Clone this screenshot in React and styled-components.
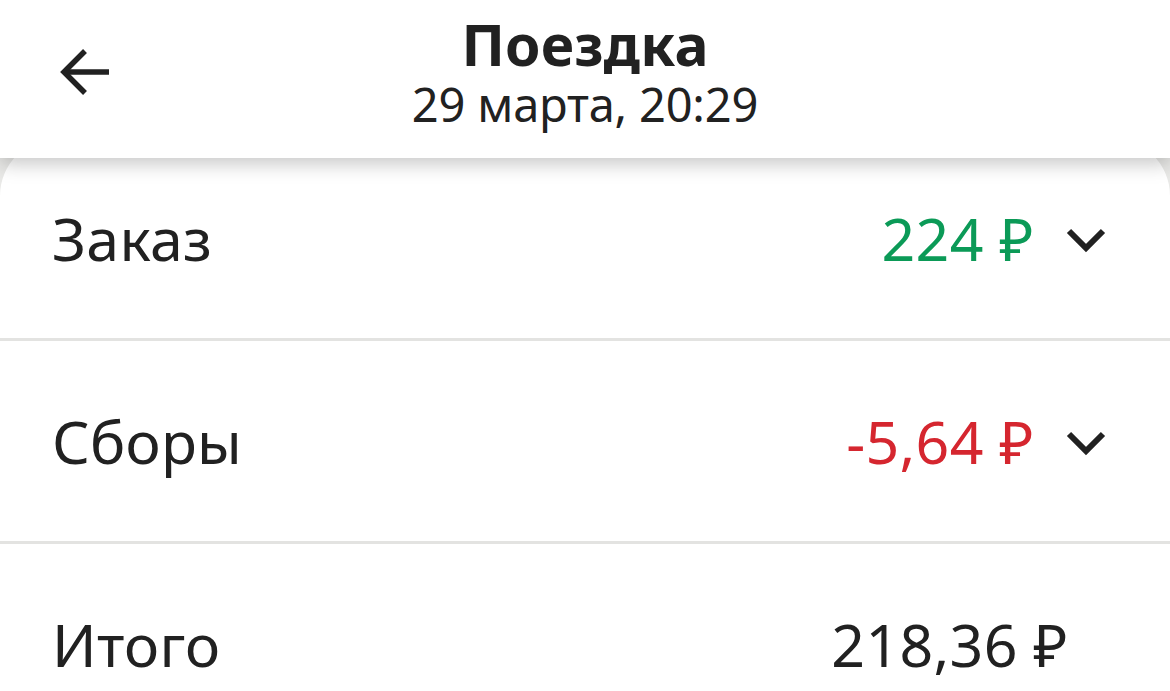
import React from 'react';
import styled, { createGlobalStyle } from 'styled-components';

const colors = {
  text: '#212121',
  green: '#0b9a57',
  red: '#d5262f',
  divider: '#e3e3e1',
  page: '#e9e9e7',
};

const GlobalStyle = createGlobalStyle`
  html, body {
    margin: 0;
    padding: 0;
    background: ${colors.page};
    font-family: "Noto Sans", "Open Sans", sans-serif;
    color: ${colors.text};
    overflow: hidden;
  }
`;

const Screen = styled.div`
  display: flex;
  flex-direction: column;
  min-height: 691px;
`;

const Header = styled.header`
  position: relative;
  z-index: 2;
  height: 158px;
  background: #fff;
  box-shadow: 0 6px 18px rgba(0, 0, 0, 0.22);
  display: grid;
  grid-template-columns: 170px 1fr 170px;
  align-items: center;
`;

const BackButton = styled.button`
  justify-self: start;
  margin-left: 56px;
  margin-top: -14px;
  padding: 0;
  border: 0;
  background: none;
  width: 58px;
  height: 52px;
  display: flex;
  align-items: center;
  justify-content: center;
  color: ${colors.text};
`;

const TitleBlock = styled.div`
  display: flex;
  flex-direction: column;
  align-items: center;
  gap: 4px;
  margin-top: -14px;
`;

const Title = styled.h1`
  margin: 0;
  font-size: 57px;
  font-weight: 700;
  line-height: 60px;
  letter-spacing: 0.2px;
`;

const Subtitle = styled.div`
  font-size: 47px;
  line-height: 52px;
  letter-spacing: -0.2px;
`;

const Card = styled.section`
  margin-top: -20px;
  flex: 1;
  background: #fff;
  border-radius: 58px 58px 0 0;
  display: flex;
  flex-direction: column;
`;

const Row = styled.div`
  height: 200px;
  display: flex;
  align-items: center;
  padding: 0 ${props => (props.$expandable ? 64 : 102)}px 0 52px;
  border-top: ${props => (props.$first ? 'none' : `3px solid ${colors.divider}`)};
  font-size: 59px;
`;

const Label = styled.span`
  flex: 1;
  letter-spacing: 0.3px;
`;

const Amount = styled.span`
  color: ${props => props.$tone === 'plus' ? colors.green : props.$tone === 'minus' ? colors.red : colors.text};
  letter-spacing: 0.3px;
`;

const Chevron = styled.span`
  display: flex;
  margin-left: 32px;
  margin-top: 4px;
  color: ${colors.text};
`;

const ArrowIcon = () => (
  <svg width="56" height="50" viewBox="0 0 56 50" fill="none" stroke="currentColor" strokeWidth="5.5">
    <path d="M52 25H8" />
    <path d="M28 4L7 25l21 21" />
  </svg>
);

const ChevronIcon = () => (
  <svg width="40" height="26" viewBox="0 0 40 26" fill="none" stroke="currentColor" strokeWidth="6">
    <path d="M3 4l17 17L37 4" />
  </svg>
);

const lines = [
  { label: 'Заказ', amount: '224 ₽', tone: 'plus', expandable: true },
  { label: 'Сборы', amount: '-5,64 ₽', tone: 'minus', expandable: true },
  { label: 'Итого', amount: '218,36 ₽', tone: 'total', expandable: false },
];

export default function App() {
  return (
    <>
      <GlobalStyle />
      <Screen>
        <Header>
          <BackButton aria-label="Назад">
            <ArrowIcon />
          </BackButton>
          <TitleBlock>
            <Title>Поездка</Title>
            <Subtitle>29 марта, 20:29</Subtitle>
          </TitleBlock>
          <div />
        </Header>
        <Card>
          {lines.map((line, i) => (
            <Row key={line.label} $first={i === 0} $expandable={line.expandable}>
              <Label>{line.label}</Label>
              <Amount $tone={line.tone}>{line.amount}</Amount>
              {line.expandable && (
                <Chevron>
                  <ChevronIcon />
                </Chevron>
              )}
            </Row>
          ))}
        </Card>
      </Screen>
    </>
  );
}
